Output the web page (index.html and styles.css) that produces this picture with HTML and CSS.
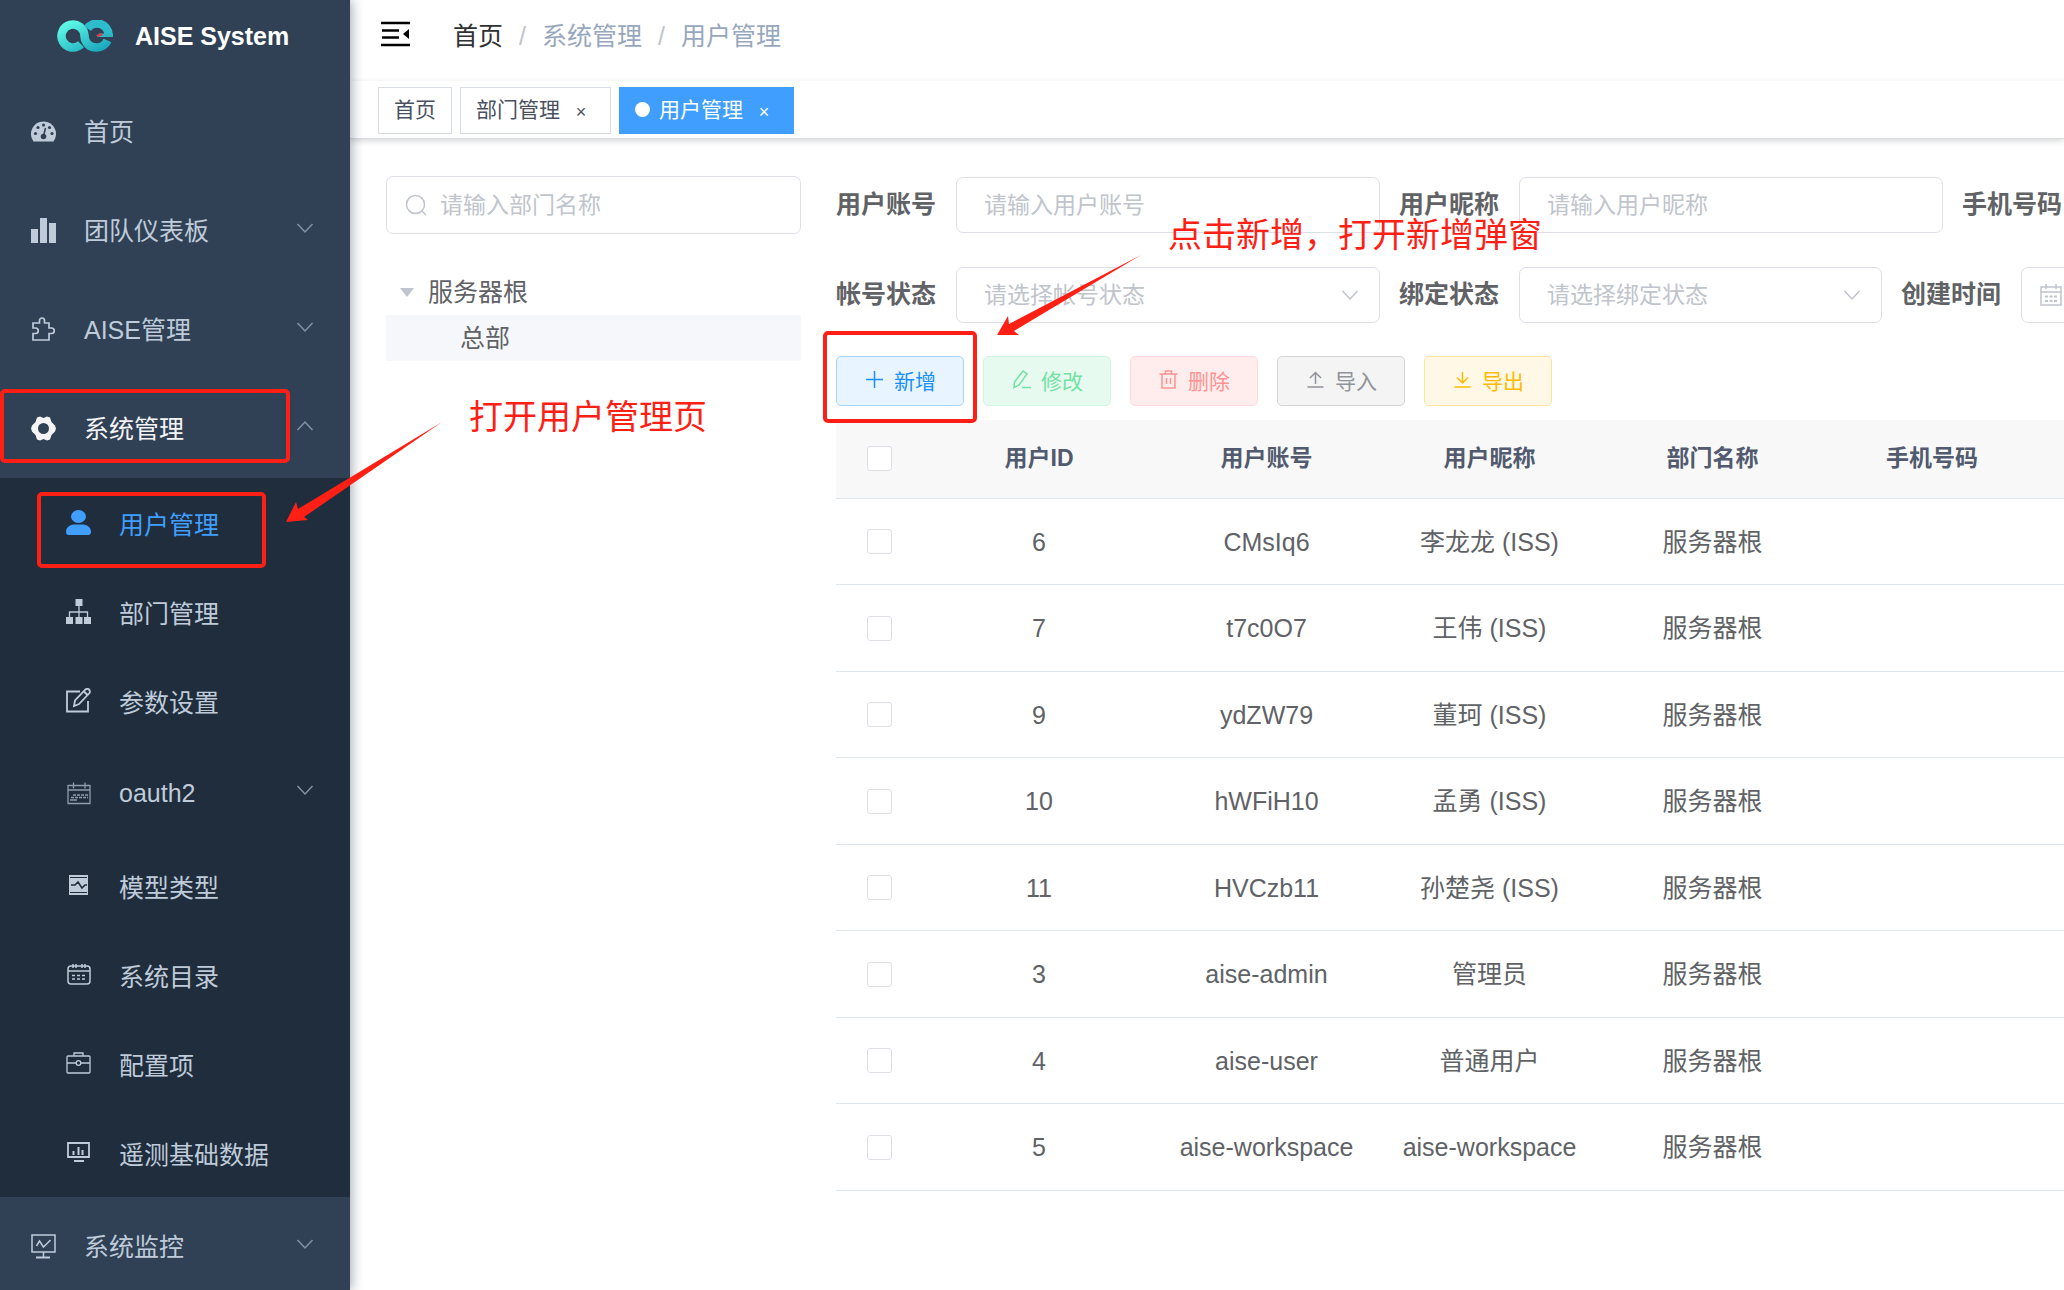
FILE: index.html
```html
<!DOCTYPE html>
<html lang="zh-CN">
<head>
<meta charset="utf-8">
<title>AISE System - 用户管理</title>
<link rel="stylesheet" href="styles.css">
</head>
<body>
<svg class="sprite" aria-hidden="true">
  <symbol id="chevron" viewBox="0 0 18 18"><path d="M1.500 5 9 13l7.500-8" fill="none" stroke="currentColor" stroke-width="1.500"/></symbol>
  <symbol id="calendar" viewBox="0 0 24 24"><g fill="none" stroke="currentColor" stroke-width="1.500"><path d="M2 4h20v18H2zM2 9h20M7 1v5M17 1v5"/><path d="M6 13.500h12M6 18h12" stroke-dasharray="3 1.500" stroke-width="2"/></g></symbol>
</svg>
<div class="app">
  <aside class="sidebar">
    <a class="brand" href="#">
      <svg class="brand__logo" viewBox="0 0 56 32">
        <defs><linearGradient id="lg" x1="0" y1="0" x2="1" y2="1"><stop offset="0" stop-color="#5ffbe6"/><stop offset="1" stop-color="#1ba6bd"/></linearGradient></defs>
        <g fill="none" stroke-width="8.500">
          <path d="M24 24.300A11.500 11.500 0 1 1 27.500 16C28 23 32.500 27.500 39.500 27.500A11.500 11.500 0 0 0 50.500 20.500" stroke="url(#lg)"/>
          <path d="M30.500 8.500A11.500 11.500 0 0 1 51.500 14.500" stroke="#2cbccb"/>
        </g>
        <path d="M42 13.500h14v3.500H40z" fill="#2cb5c5"/>
        <path d="M39 15.500l5-2.500 2 1.500-4 2.500z" fill="#e23b46"/>
      </svg>
      <span>AISE System</span>
    </a>
    <nav class="menu">
      <a class="menu__item" href="#">
        <svg class="menu__icon" viewBox="0 0 25 25"><path fill="currentColor" d="M2.500 22.500A12.500 12.500 0 1 1 22.500 22.500z"/><g fill="#304156"><circle cx="12.500" cy="6" r="1.600"/><circle cx="7" cy="8.500" r="1.600"/><circle cx="18.500" cy="8.500" r="1.600"/><circle cx="4.500" cy="14.500" r="1.600"/><circle cx="21" cy="14.500" r="1.600"/><circle cx="12.500" cy="17.500" r="2.800"/></g><path d="M12.500 17 14.500 9" stroke="#304156" stroke-width="1.600"/></svg>
        <span class="menu__label">首页</span>
      </a>
      <a class="menu__item" href="#">
        <svg class="menu__icon" viewBox="0 0 25 25"><path fill="currentColor" d="M0 11h7v14H0zM9 0h7v25H9zM18 5h7v20h-7z"/></svg>
        <span class="menu__label">团队仪表板</span>
        <svg class="menu__arrow"><use href="#chevron"/></svg>
      </a>
      <a class="menu__item" href="#">
        <svg class="menu__icon" viewBox="0 0 25 25"><path fill="none" stroke="currentColor" stroke-width="1.700" d="M2 6h6.500V3.500a2.500 2.500 0 0 1 5 0V6H18v5h2.500a2.500 2.500 0 0 1 0 5.500H18V23H2v-6.500h2.500a2.500 2.500 0 0 0 0-5.500H2z"/></svg>
        <span class="menu__label">AISE管理</span>
        <svg class="menu__arrow"><use href="#chevron"/></svg>
      </a>
      <a class="menu__item menu__item--open" href="#">
        <svg class="menu__icon" viewBox="0 0 25 25"><path fill="currentColor" fill-rule="evenodd" d="M6 1.500 9 .5l3.500 1.500L16 .5l3 1 1.500 4.500L24 9.500l1 3-1 3-3.500 3.500L19 23.500l-3 1-3.500-1.500L9 24.500l-3-1L4.500 19 1 15.500l-1-3 1-3L4.500 6zM12.500 7a5.500 5.500 0 1 0 0 11 5.500 5.500 0 0 0 0-11z"/></svg>
        <span class="menu__label">系统管理</span>
        <svg class="menu__arrow menu__arrow--up"><use href="#chevron"/></svg>
      </a>
      <div class="submenu">
        <a class="menu__item menu__item--active" href="#">
          <svg class="menu__icon" viewBox="0 0 25 25"><path fill="currentColor" d="M12.500 0a7.500 6.500 0 1 1 0 13 7.500 6.500 0 0 1 0-13zM0 22c0-5 4-7.500 9-7.500h7c5 0 9 2.500 9 7.500 0 2-1 3-3 3H3c-2 0-3-1-3-3z"/></svg>
          <span class="menu__label">用户管理</span>
        </a>
        <a class="menu__item" href="#">
          <svg class="menu__icon" viewBox="0 0 25 25"><path fill="currentColor" d="M9.500 0h7v7h-7zM0 18h7v7H0zM9.500 18h7v7h-7zM18 18h7v7h-7z"/><path d="M13 6v12M3.500 18v-5h18v5" fill="none" stroke="currentColor" stroke-width="1.300"/></svg>
          <span class="menu__label">部门管理</span>
        </a>
        <a class="menu__item" href="#">
          <svg class="menu__icon" viewBox="0 0 25 25"><g fill="none" stroke="currentColor" stroke-width="1.800"><path d="M14 3.500H1v20h21V13"/><path d="M8 18l1-5.500L19.500 1.500q2-1.500 3.500 0t.5 3.500L13 16z M18 3.500l3.500 3.500"/></g></svg>
          <span class="menu__label">参数设置</span>
        </a>
        <a class="menu__item menu__item--group" href="#">
          <svg class="menu__icon menu__icon--dim" viewBox="0 0 25 25"><g fill="none" stroke="currentColor" stroke-width="1.300"><path d="M2 4.500h22v18H2zM2 9h22M7.500 1.500v6M19 1.500v6M4 19h7"/><path d="M7 14h15M5 16.500h17" stroke-dasharray="3 1"/></g></svg>
          <span class="menu__label">oauth2</span>
          <svg class="menu__arrow"><use href="#chevron"/></svg>
        </a>
        <a class="menu__item" href="#">
          <svg class="menu__icon" viewBox="0 0 25 25"><path fill="currentColor" d="M3 2h19v20H3z"/><path d="M4 4.500h17M4 19.500h17" stroke="#1f2d3d"/><path d="M5 12h4l3-3 4 6 3-3h2" fill="none" stroke="#1f2d3d" stroke-width="1.600"/></svg>
          <span class="menu__label">模型类型</span>
        </a>
        <a class="menu__item" href="#">
          <svg class="menu__icon" viewBox="0 0 25 25"><g fill="none" stroke="currentColor" stroke-width="1.500"><rect x="2" y="4" width="22" height="18" rx="3"/><path d="M2 9h22M7 2v4M10 2v4M16 2v4M19 2v4"/><path d="M6 13.500h14M6 17h14" stroke-dasharray="3 2"/></g></svg>
          <span class="menu__label">系统目录</span>
        </a>
        <a class="menu__item" href="#">
          <svg class="menu__icon" viewBox="0 0 25 25"><g fill="none" stroke="currentColor" stroke-width="1.300"><rect x="1" y="5" width="23" height="17" rx="1"/><path d="M8 5V2h9v3M1 12h9M15 12h9"/><circle cx="12.500" cy="12" r="2.300"/></g></svg>
          <span class="menu__label">配置项</span>
        </a>
        <a class="menu__item" href="#">
          <svg class="menu__icon" viewBox="0 0 25 25"><path fill="none" stroke="currentColor" stroke-width="1.800" d="M2 3h21v14H2z"/><path d="M7.500 15v-4M12.500 15V7M16.500 15v-5M8 21h10" stroke="currentColor" stroke-width="2"/></svg>
          <span class="menu__label">遥测基础数据</span>
        </a>
      </div>
      <a class="menu__item" href="#">
        <svg class="menu__icon" viewBox="0 0 25 25"><g fill="none" stroke="currentColor" stroke-width="1.500"><path d="M1 1h23v17H1zM12.500 18v5M5.500 12l3-5 4 6 7-7"/><path d="M5 23.500h14" stroke-width="2"/></g></svg>
        <span class="menu__label">系统监控</span>
        <svg class="menu__arrow"><use href="#chevron"/></svg>
      </a>
    </nav>
  </aside>

  <main class="main">
    <header class="navbar">
      <button class="hamburger" type="button" aria-label="收起菜单">
        <svg viewBox="0 0 29 26" width="29" height="26"><path d="M0 2h29M1 9.500h17M1 16.500h17M0 24h29" stroke="#000" stroke-width="2.500"/><path d="M22 13l6-5v10z"/></svg>
      </button>
      <nav class="breadcrumb">
        <a class="breadcrumb__home" href="#">首页</a><span class="breadcrumb__sep">/</span><span>系统管理</span><span class="breadcrumb__sep">/</span><span>用户管理</span>
      </nav>
    </header>
    <div class="tags">
      <a class="tag" href="#">首页</a>
      <a class="tag" href="#">部门管理<span class="tag__close">×</span></a>
      <a class="tag tag--active" href="#"><span class="tag__dot"></span>用户管理<span class="tag__close">×</span></a>
    </div>
    <div class="content">
      <section class="dept">
        <label class="search">
          <svg class="search__icon" viewBox="0 0 22 22"><g fill="none" stroke="currentColor" stroke-width="1.500"><circle cx="10.500" cy="10.500" r="9"/><path d="M17 17l4 4"/></g></svg>
          <input class="search__input" type="text" placeholder="请输入部门名称" aria-label="部门名称">
        </label>
        <ul class="tree">
          <li class="tree__node"><svg class="tree__caret" viewBox="0 0 14 9"><path d="M0 0h14L7 9z" fill="#c0c4cc"/></svg>服务器根</li>
          <li class="tree__node tree__node--child">总部</li>
        </ul>
      </section>
      <section class="users">
        <form class="filters">
          <div class="filters__row">
            <div class="field"><label class="field__label" for="account">用户账号</label><input class="control" id="account" type="text" placeholder="请输入用户账号"></div>
            <div class="field"><label class="field__label" for="nick">用户昵称</label><input class="control" id="nick" type="text" placeholder="请输入用户昵称"></div>
            <div class="field"><label class="field__label" for="phone">手机号码</label><input class="control" id="phone" type="text"></div>
          </div>
          <div class="filters__row">
            <div class="field"><label class="field__label" for="state">帐号状态</label><div class="picker"><select class="control" id="state"><option>请选择帐号状态</option></select><svg class="picker__icon"><use href="#chevron"/></svg></div></div>
            <div class="field"><label class="field__label" for="bind">绑定状态</label><div class="picker picker--short"><select class="control" id="bind"><option>请选择绑定状态</option></select><svg class="picker__icon"><use href="#chevron"/></svg></div></div>
            <div class="field"><label class="field__label" for="created">创建时间</label><div class="picker"><input class="control" id="created" type="text"><svg class="picker__icon picker__icon--start"><use href="#calendar"/></svg></div></div>
          </div>
        </form>
        <div class="toolbar">
          <button class="btn btn--primary" type="button"><svg class="btn__icon" viewBox="0 0 21 21"><path d="M2 10.500h17M10.500 2v17"/></svg>新增</button>
          <button class="btn btn--success" type="button"><svg class="btn__icon" viewBox="0 0 21 21"><path d="M3 18.500l.5-5.500L12 2l4 3L8 16zM11 18.500h9"/></svg>修改</button>
          <button class="btn btn--danger" type="button"><svg class="btn__icon" viewBox="0 0 21 21"><path d="M1.500 5h18M4 5v14h13V5M7.500 5V2h6v3M8.500 9v6M12.500 9v6"/></svg>删除</button>
          <button class="btn btn--info" type="button"><svg class="btn__icon" viewBox="0 0 21 21"><path d="M2.500 18h16M10.500 15V3.500M5 9l5.500-5.500L16 9"/></svg>导入</button>
          <button class="btn btn--warning" type="button"><svg class="btn__icon" viewBox="0 0 21 21"><path d="M2.500 18h16M10.500 3v11M5 8.500l5.500 5.500L16 8.500"/></svg>导出</button>
        </div>
        <table class="table">
          <colgroup><col class="col-check"><col class="col-id"><col class="col-text"><col class="col-text"><col class="col-text"><col></colgroup>
          <thead>
            <tr><th><input class="check" type="checkbox" aria-label="全选"></th><th>用户ID</th><th>用户账号</th><th>用户昵称</th><th>部门名称</th><th>手机号码</th></tr>
          </thead>
          <tbody>
            <tr><td><input class="check" type="checkbox" aria-label="选择 6"></td><td>6</td><td>CMsIq6</td><td>李龙龙 (ISS)</td><td>服务器根</td><td></td></tr>
            <tr><td><input class="check" type="checkbox" aria-label="选择 7"></td><td>7</td><td>t7c0O7</td><td>王伟 (ISS)</td><td>服务器根</td><td></td></tr>
            <tr><td><input class="check" type="checkbox" aria-label="选择 9"></td><td>9</td><td>ydZW79</td><td>董珂 (ISS)</td><td>服务器根</td><td></td></tr>
            <tr><td><input class="check" type="checkbox" aria-label="选择 10"></td><td>10</td><td>hWFiH10</td><td>孟勇 (ISS)</td><td>服务器根</td><td></td></tr>
            <tr><td><input class="check" type="checkbox" aria-label="选择 11"></td><td>11</td><td>HVCzb11</td><td>孙楚尧 (ISS)</td><td>服务器根</td><td></td></tr>
            <tr><td><input class="check" type="checkbox" aria-label="选择 3"></td><td>3</td><td>aise-admin</td><td>管理员</td><td>服务器根</td><td></td></tr>
            <tr><td><input class="check" type="checkbox" aria-label="选择 4"></td><td>4</td><td>aise-user</td><td>普通用户</td><td>服务器根</td><td></td></tr>
            <tr><td><input class="check" type="checkbox" aria-label="选择 5"></td><td>5</td><td>aise-workspace</td><td>aise-workspace</td><td>服务器根</td><td></td></tr>
          </tbody>
        </table>
      </section>
    </div>
  </main>

  <!-- Guide marks laid over the page -->
  <div class="mark mark--system"></div>
  <div class="mark mark--user"></div>
  <div class="mark mark--add"></div>
  <p class="note note--open">打开用户管理页</p>
  <p class="note note--add">点击新增，打开新增弹窗</p>
  <svg class="arrow arrow--open" viewBox="0 0 156 102"><path d="M0 101 10 81 12 88 156 1 18 96 22 99z"/></svg>
  <svg class="arrow arrow--add" viewBox="0 0 144 82"><path d="M0 80 11 61 12 69 144 0 17 76 22 80z"/></svg>
</div>
</body>
</html>
```
FILE: styles.css
```css
* { box-sizing: border-box; }

body {
  margin: 0;
  font: 25px/36px "Liberation Sans", "Noto Sans CJK SC", sans-serif;
  color: #606266;
  background: #fff;
}

a { color: inherit; text-decoration: none; }

input, select, button { font-family: inherit; }

.sprite { display: none; }

.app {
  position: relative;
  display: flex;
  height: 100vh;
  overflow: hidden;
}

/* Sidebar */
.sidebar {
  flex: 0 0 350px;
  background: #304156;
  box-shadow: 2px 0 11px rgba(0, 21, 41, .35);
  z-index: 2;
  overflow: hidden;
  color: #bfcbd9;
}

.brand {
  display: flex;
  align-items: center;
  gap: 22px;
  height: 82px;
  padding: 0 0 10px 57px;
  color: #fff;
  font-weight: 700;
}

.brand__logo { width: 56px; height: 32px; }

.menu__item {
  display: flex;
  align-items: center;
  height: 99px;
  padding: 0 36px 0 31px;
}

.menu__icon { flex: none; width: 25px; height: 25px; margin-right: 28px; }
.menu__icon--dim { opacity: .7; }
.menu__label { flex: 1; }
.menu__arrow { width: 18px; height: 18px; margin-bottom: 6px; color: #8492a1; }
.menu__arrow--up { transform: rotate(180deg); }
.menu__item--open { color: #f4f4f5; }

.submenu { background: #1f2d3d; }
.submenu .menu__item { height: 89px; padding-left: 66px; }
.submenu .menu__label { padding-top: 5px; }
.submenu .menu__item--group { height: 96px; }
.submenu .menu__item--group .menu__label { padding-top: 0; }
.submenu .menu__item--active { color: #409eff; }

/* Top bar */
.main { flex: 1; min-width: 0; overflow: hidden; }

.navbar {
  display: flex;
  align-items: center;
  gap: 43px;
  height: 81px;
  padding: 0 31px 9px;
  box-shadow: 0 1px 6px rgba(0, 21, 41, .12);
}

.hamburger {
  display: flex;
  padding: 0;
  border: 0;
  background: none;
  margin-bottom: 4px;
}

.breadcrumb { display: flex; color: #97a8be; }
.breadcrumb__home { color: #303133; }
.breadcrumb__sep { margin: 0 16px; color: #c0c4cc; }

.tags {
  display: flex;
  gap: 8px;
  height: 58px;
  padding: 6px 28px;
  background: #fff;
  border-bottom: 1px solid #d8dce5;
  box-shadow: 0 2px 6px rgba(0, 0, 0, .16);
}

.tag {
  display: flex;
  align-items: center;
  height: 47px;
  padding: 0 15px 2px;
  border: 1px solid #d8dce5;
  color: #495060;
  font-size: 21px;
}

.tag--active { background: #409eff; border-color: #409eff; color: #fff; }
.tag__dot { width: 15px; height: 15px; margin-right: 9px; border-radius: 50%; background: #fff; }
.tag__close { width: 28px; margin-left: 7px; padding-top: 4px; text-align: center; font-size: 18px; }

/* Content */
.content {
  display: flex;
  gap: 35px;
  padding: 37px 0 0 36px;
}

.dept { flex: 0 0 415px; }

.search {
  display: flex;
  align-items: center;
  gap: 13px;
  height: 58px;
  padding: 0 18px;
  border: 1px solid #dcdfe6;
  border-radius: 7px;
}

.search__icon { width: 22px; height: 22px; color: #c0c4cc; }
.search__input { flex: 1; min-width: 0; padding: 0; border: 0; font-size: 23px; }

::placeholder { color: #c0c4cc; opacity: 1; }

.tree { margin: 35px 0 0; padding: 0; list-style: none; }
.tree__node { display: flex; align-items: center; gap: 14px; height: 46px; padding-left: 14px; }
.tree__node--child { padding-left: 74px; background: #f5f7fa; }
.tree__caret { width: 14px; height: 9px; }

.users { flex: 1; min-width: 0; padding-top: 1px; overflow: hidden; }

.filters { display: grid; gap: 34px; }
.filters__row { display: flex; gap: 19px; }

.field { display: flex; flex: none; align-items: center; }
.field__label { width: 120px; padding-bottom: 2px; font-weight: 700; }

.control {
  width: 424px;
  height: 56px;
  padding: 0 27px;
  border: 1px solid #dcdfe6;
  border-radius: 7px;
  background: #fff;
  color: #c0c4cc;
  font-size: 23px;
  appearance: none;
}

.picker { display: grid; width: 424px; align-items: center; }
.picker--short { width: 363px; }
.picker > * { grid-area: 1 / 1; }
.picker .control { width: 100%; }
.picker__icon { width: 18px; height: 18px; margin-right: 21px; justify-self: end; color: #c0c4cc; pointer-events: none; }
.picker__icon--start { width: 24px; height: 24px; margin: 0 0 0 18px; justify-self: start; }

.toolbar { display: flex; gap: 19px; margin: 33px 0 14px; }

.btn {
  display: flex;
  align-items: center;
  gap: 9px;
  height: 50px;
  padding: 0 27px 3px;
  border: 1px solid;
  border-radius: 5px;
  font-size: 21px;
}

.btn__icon { width: 21px; height: 21px; fill: none; stroke: currentColor; stroke-width: 1.5; }
.btn--primary { color: #1890ff; background: #e8f4ff; border-color: #a3d3ff; }
.btn--success { color: #71e2a3; background: #e7faf0; border-color: #d0f5e0; }
.btn--danger { color: #ff9292; background: #ffeded; border-color: #ffdbdb; }
.btn--info { color: #909399; background: #f4f4f5; border-color: #d3d4d6; }
.btn--warning { color: #ffba00; background: #fff8e6; border-color: #ffe399; }

.table { width: 100%; table-layout: fixed; border-collapse: separate; border-spacing: 0; text-align: center; }
.col-check { width: 87px; }
.col-id { width: 232px; }
.col-text { width: 223px; }

.table th, .table td { padding: 0; border-bottom: 1px solid #dfe6ec; }
.table th { height: 79px; padding-bottom: 2px; background: #f8f8f9; color: #515a6e; font-size: 23px; }
.table td { height: 86px; }
.table tr:nth-child(even) td { height: 87px; }
.table th:last-child { padding-right: 24px; }

.check {
  display: block;
  width: 25px;
  height: 25px;
  margin: 0 auto;
  border: 1px solid #dcdfe6;
  border-radius: 3px;
  background: #fff;
  appearance: none;
}

/* Guide marks */
.mark {
  position: absolute;
  z-index: 3;
  border: 4px solid #ff2015;
  border-radius: 5px;
}

.mark--system { left: 0; top: 389px; width: 290px; height: 74px; }
.mark--user { left: 37px; top: 492px; width: 229px; height: 76px; }
.mark--add { left: 823px; top: 331px; width: 154px; height: 92px; }

.note {
  position: absolute;
  z-index: 3;
  margin: 0;
  color: #ff2015;
  font-size: 34px;
  line-height: 48px;
  white-space: nowrap;
}

.note--open { left: 469px; top: 393px; }
.note--add { left: 1168px; top: 211px; }

.arrow { position: absolute; z-index: 3; fill: #ff2015; }
.arrow--open { left: 286px; top: 421px; width: 156px; height: 102px; }
.arrow--add { left: 997px; top: 255px; width: 144px; height: 82px; }
```
